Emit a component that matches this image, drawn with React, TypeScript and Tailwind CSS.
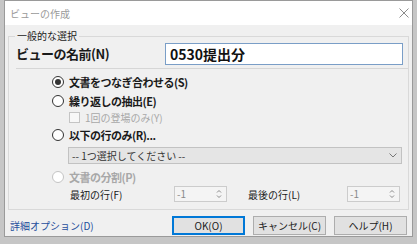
import React from "react";

// ラジオボタン
const Radio = ({
  label,
  checked = false,
  disabled = false,
}: {
  label: string;
  checked?: boolean;
  disabled?: boolean;
}) => (
  <div className="flex items-center h-[16px]">
    <span
      className={
        "w-[12px] h-[12px] rounded-full border flex items-center justify-center bg-white " +
        (disabled ? "border-[#c4c4c4]" : "border-[#333333]")
      }
    >
      {checked && <span className="w-[6px] h-[6px] rounded-full bg-[#333333]" />}
    </span>
    <span
      className={
        "ml-[5px] text-[11px] font-bold leading-[16px] tracking-[-0.5px] " +
        (disabled ? "text-[#a8a8a8]" : "text-[#1a1a1a]")
      }
    >
      {label}
    </span>
  </div>
);

// スピンボックス（無効）
const Spinner = () => (
  <div className="w-[53px] h-[16px] border border-[#cccccc] bg-[#f4f4f4] flex items-center">
    <span className="pl-[2px] text-[10px] leading-[14px] text-[#8a8a8a] flex-1">-1</span>
    <svg width="8" height="12" viewBox="0 0 8 12" className="mr-[3px]">
      <path d="M2 4.5 L4 2.5 L6 4.5" stroke="#8a8a8a" strokeWidth="1" fill="none" />
      <path d="M2 7.5 L4 9.5 L6 7.5" stroke="#8a8a8a" strokeWidth="1" fill="none" />
    </svg>
  </div>
);

const Button = ({ label, primary = false }: { label: string; primary?: boolean }) => (
  <button
    className={
      "w-[73px] h-[19px] bg-[#e1e1e1] text-[10px] leading-none text-[#222222] flex items-center justify-center " +
      (primary ? "border-2 border-[#0078d7]" : "border border-[#adadad]")
    }
  >
    {label}
  </button>
);

export default function App() {
  return (
    <div className="w-[417px] h-[244px] bg-[#c6c6c6] pl-[4px] font-['Noto_Sans_CJK_JP',sans-serif] overflow-hidden">
      <div className="w-[409px] h-[237px] flex flex-col bg-[#f0f0f0] border border-[#9a9a9a]">
        {/* タイトルバー */}
        <div className="h-[24px] bg-white flex items-center justify-between pl-[5px] pr-[3px]">
          <span className="text-[10px] text-[#9a9a9a]">ビューの作成</span>
          <svg width="10" height="10" viewBox="0 0 10 10">
            <path d="M0.5 0.5 L9.5 9.5 M9.5 0.5 L0.5 9.5" stroke="#8c8c8c" strokeWidth="1" />
          </svg>
        </div>

        <div className="flex-1 flex flex-col px-[3px] pt-[4px]">
          <fieldset className="border border-[#d9d9d9] pb-[7px]">
            <legend className="ml-[6px] px-[2px] text-[10px] leading-[14px] text-[#1a1a1a]">
              一般的な選択
            </legend>

            {/* 名前 */}
            <div className="flex items-center pl-[7px] pr-[5px]">
              <span className="text-[13px] font-bold tracking-[-0.5px] text-[#1a1a1a]">ビューの名前(N)</span>
              <div className="ml-auto w-[238px] h-[22px] border border-[#7a9ec7] bg-white flex items-center px-[4px]">
                <span className="text-[14px] font-bold text-[#111111]">0530提出分</span>
              </div>
            </div>
            <div className="mt-[3px] ml-[7px] h-px bg-[#d6d6d6]" />

            <div className="flex flex-col pl-[43px] pr-[6px]">
              <div className="mt-[5px]">
                <Radio label="文書をつなぎ合わせる(S)" checked />
              </div>
              <div className="mt-[3px]">
                <Radio label="繰り返しの抽出(E)" />
              </div>
              <div className="mt-[1px] ml-[17px] flex items-center h-[14px]">
                <span className="w-[11px] h-[11px] border border-[#c4c4c4] bg-[#f7f7f7]" />
                <span className="ml-[5px] text-[10px] text-[#a8a8a8]">1回の登場のみ(Y)</span>
              </div>
              <div className="mt-[3px]">
                <Radio label="以下の行のみ(R)..." />
              </div>
              <div className="mt-[4px] ml-[16px] h-[17px] bg-[#e5e5e5] border border-[#c2c2c2] flex items-center justify-between pl-[3px] pr-[4px]">
                <span className="text-[10px] text-[#333333]">-- 1つ選択してください --</span>
                <svg width="8" height="5" viewBox="0 0 8 5">
                  <path d="M0.5 0.5 L4 4 L7.5 0.5" stroke="#777777" strokeWidth="1" fill="none" />
                </svg>
              </div>
              <div className="mt-[5px]">
                <Radio label="文書の分割(P)" disabled />
              </div>
              <div className="mt-[1px] ml-[18px] flex items-center">
                <span className="w-[104px] text-[10px] text-[#1a1a1a]">最初の行(F)</span>
                <Spinner />
                <span className="ml-[21px] w-[99px] text-[10px] text-[#1a1a1a]">最後の行(L)</span>
                <Spinner />
              </div>
            </div>
          </fieldset>

          {/* ボタン行 */}
          <div className="mt-[6px] flex items-center">
            <span className="ml-[2px] text-[10px] text-[#1f4e9c]">詳細オプション(D)</span>
            <div className="ml-auto mr-[2px] flex gap-[8px]">
              <Button label="OK(O)" primary />
              <Button label="キャンセル(C)" />
              <Button label="ヘルプ(H)" />
            </div>
          </div>
        </div>
      </div>
    </div>
  );
}
